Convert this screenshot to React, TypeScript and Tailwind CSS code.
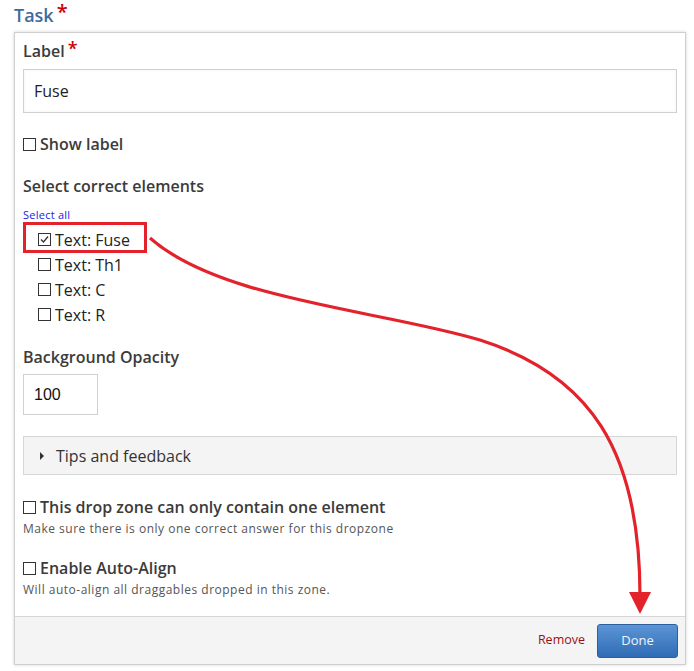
import React from 'react'

const font = { fontFamily: '"Open Sans", "Liberation Sans", sans-serif' }

const Box = ({ checked = false }: { checked?: boolean }) => (
  <span className='inline-flex items-center justify-center w-[13px] h-[13px] border border-[#333] bg-white shrink-0'>
    {checked && (
      <svg width='9' height='9' viewBox='0 0 9 9'>
        <path d='M1 4.5 L3.5 7 L8 1.5' fill='none' stroke='#333' strokeWidth='1.3' />
      </svg>
    )}
  </span>
)

const options = ['Fuse', 'Th1', 'C', 'R']

const App = () => {
  return (
    <div className='relative w-[694px] h-[671px] bg-white overflow-hidden text-[#3b3b3b]' style={font}>
      {/* Heading */}
      <div className='h-[32px] pl-[14px] pt-[2px] flex items-start text-[18px] font-semibold leading-[26px] text-[#3e6aa0]'>
        Task<span className='text-[#c00] ml-[3px] text-[20px] leading-[24px] mt-[-2px]'>*</span>
      </div>

      {/* Panel */}
      <div className='ml-[14px] w-[672px] h-[633px] border border-[#cfcfcf] shadow-[0_0_3px_rgba(0,0,0,0.18)] flex flex-col'>
        <div className='px-[8px] pt-[7px] flex-1'>
          <div className='flex items-start text-[16px] font-semibold leading-[22px]'>
            Label<span className='text-[#c00] ml-[3px] text-[18px] leading-[18px] mt-[-1px]'>*</span>
          </div>
          <div className='mt-[7px] h-[44px] border border-[#d0d0d0] shadow-[inset_0_0_3px_rgba(0,0,0,0.06)] flex items-center pl-[10px] text-[16px] text-[#222]'>
            Fuse
          </div>

          <div className='mt-[20px] flex items-center gap-[4px] text-[16px] font-semibold leading-[22px]'>
            <Box />Show label
          </div>

          <div className='mt-[20px] text-[16px] font-semibold leading-[22px]'>Select correct elements</div>
          <div className='mt-[11px] text-[11px] leading-[14px] tracking-[0.25px] text-[#1a1ae6]'>Select all</div>

          <div className='mt-[5px] pl-[15px]'>
            {options.map((o, i) => (
              <div key={o} className='relative flex items-center gap-[4px] h-[25px] text-[16px] text-[#222]'>
                <Box checked={i === 0} />Text: {o}
                {i === 0 && (
                  <div className='absolute left-[-15px] top-[-5px] w-[124px] h-[31px] border-[3px] border-[#e3222b]' />
                )}
              </div>
            ))}
          </div>

          <div className='mt-[19px] text-[16px] font-semibold leading-[22px]'>Background Opacity</div>
          <div
            className='mt-[6px] w-[75px] h-[41px] border border-[#d0d0d0] flex items-center pl-[10px] text-[16px] text-[#111]'
            style={{ fontFamily: '"Liberation Sans", Arial, sans-serif' }}
          >
            100
          </div>

          <div className='mt-[21px] h-[39px] border border-[#d6d6d6] bg-[#f4f4f4] flex items-center pl-[15px] text-[16px] text-[#333]'>
            <svg width='6' height='8' viewBox='0 0 6 8' className='mr-[11px]'>
              <path d='M1 0 L5 4 L1 8 Z' fill='#333' />
            </svg>
            Tips and feedback
          </div>

          <div className='mt-[21px] flex items-center gap-[4px] text-[16px] font-semibold leading-[22px]'>
            <Box />This drop zone can only contain one element
          </div>
          <div className='mt-[2px] text-[12px] leading-[18px] tracking-[0.5px] text-[#555]'>Make sure there is only one correct answer for this dropzone</div>

          <div className='mt-[19px] flex items-center gap-[4px] text-[16px] font-semibold leading-[22px]'>
            <Box />Enable Auto-Align
          </div>
          <div className='mt-[2px] text-[12px] leading-[18px] tracking-[0.5px] text-[#555]'>Will auto-align all draggables dropped in this zone.</div>
        </div>

        {/* Footer */}
        <div className='h-[48px] border-t border-[#d6d6d6] bg-[#f4f4f4] flex items-center justify-end pr-[7px] gap-[12px]'>
          <span className='text-[12.5px] text-[#9a1010]'>Remove</span>
          <button className='w-[81px] h-[34px] rounded-[3px] border border-[#2b5f9e] bg-gradient-to-b from-[#5c95d6] to-[#2f6cb5] text-[13px] text-[#eef4fb]'>
            Done
          </button>
        </div>
      </div>

      {/* Annotation arrow */}
      <svg className='absolute left-0 top-0 pointer-events-none' width='694' height='671' viewBox='0 0 694 671'>
        <path
          d='M150 238 C220 300 380 310 480 340 C590 375 640 450 640 596'
          fill='none'
          stroke='#e3222b'
          strokeWidth='3.2'
        />
        <path d='M629 592 L651 592 L640 614 Z' fill='#e3222b' />
      </svg>
    </div>
  )
}

export default App
